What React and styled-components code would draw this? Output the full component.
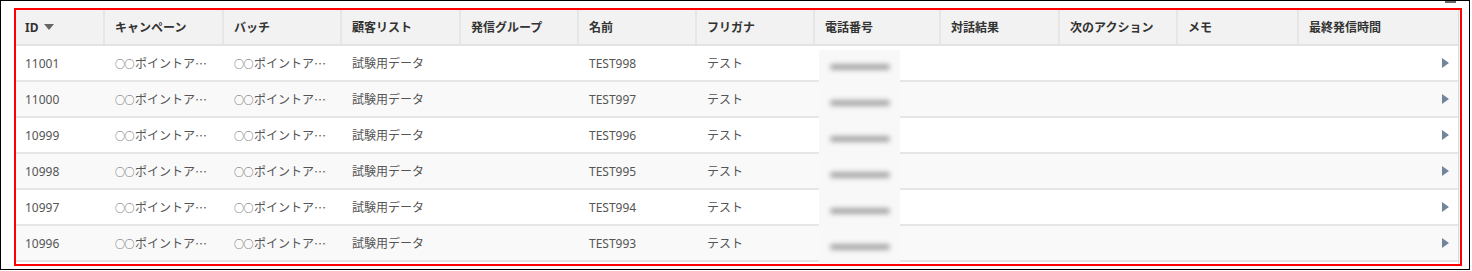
import React from "react";
import styled, { createGlobalStyle } from "styled-components";

const GlobalStyle = createGlobalStyle`
  html, body {
    margin: 0;
    padding: 0;
    background: #fff;
  }
  body {
    font-family: "Noto Sans", "Noto Sans CJK JP", sans-serif;
  }
`;

const COLS = "87px 119px 118px 119px 118px 118px 118px 126px 119px 118px 121px 159px";

const Frame = styled.div`
  position: relative;
  box-sizing: border-box;
  width: 1470px;
  height: 270px;
  border: 1px solid #000;
  padding: 7px 0 0 13px;
`;

const Nub = styled.div`
  position: absolute;
  top: 0;
  left: 1444px;
  width: 11px;
  height: 2px;
  background: #666;
`;

const Highlight = styled.div`
  box-sizing: border-box;
  width: 1448px;
  height: 258px;
  border: 2px solid #f00;
`;

const Table = styled.div`
  position: relative;
  width: 1442px;
  height: 254px;
  border-right: 1px solid #dcdcdc;
  font-size: 12px;
`;

const HeadRow = styled.div`
  display: grid;
  grid-template-columns: ${COLS};
  height: 36px;
  box-sizing: border-box;
  background: #f2f2f2;
  border-bottom: 2px solid #e3e3e3;
`;

const HeadCell = styled.div`
  display: flex;
  align-items: center;
  gap: 6px;
  padding-left: ${(p) => (p.$first ? "9px" : "10px")};
  border-left: ${(p) => (p.$first ? "none" : "2px solid #e6e6e6")};
  font-weight: bold;
  color: #333;
  white-space: nowrap;
`;

const Row = styled.div`
  display: grid;
  grid-template-columns: ${COLS};
  height: 36px;
  box-sizing: border-box;
  background: ${(p) => (p.$alt ? "#f9f9f9" : "#fff")};
  border-bottom: 2px solid #e6e6e6;
`;

const Cell = styled.div`
  display: flex;
  align-items: center;
  padding-left: ${(p) => (p.$first ? "9px" : "12px")};
  padding-right: ${(p) => (p.$end ? "7px" : "0")};
  justify-content: ${(p) => (p.$end ? "flex-end" : "flex-start")};
  color: #555;
  white-space: nowrap;
  overflow: hidden;
`;

const Circles = styled.span`
  font-family: "Noto Sans CJK JP", sans-serif;
  font-size: 10px;
  letter-spacing: -0.5px;
  margin-right: 1px;
`;

const Dots = styled.span`
  font-family: "Noto Sans CJK JP", sans-serif;
`;

const Redaction = styled.div`
  position: absolute;
  left: 803px;
  top: 40px;
  width: 81px;
  height: 214px;
  background: #f8f8f8;
  display: flex;
  flex-direction: column;
  align-items: center;
`;

const BlurBar = styled.div`
  width: 60px;
  height: 6px;
  margin-top: ${(p) => (p.$first ? "14px" : "30px")};
  background: #a8a8a8;
  border-radius: 3px;
  filter: blur(2.5px);
`;

const SortArrow = () => (
  <svg width="10" height="6" viewBox="0 0 10 6">
    <polygon points="0,0 10,0 5,6" fill="#666" />
  </svg>
);

const RowArrow = () => (
  <svg width="7" height="10" viewBox="0 0 7 10">
    <polygon points="0,0 7,5 0,10" fill="#72859a" />
  </svg>
);

const Campaign = () => (
  <>
    <Circles>○○</Circles>ポイントア<Dots>…</Dots>
  </>
);

const headers = [
  "キャンペーン",
  "バッチ",
  "顧客リスト",
  "発信グループ",
  "名前",
  "フリガナ",
  "電話番号",
  "対話結果",
  "次のアクション",
  "メモ",
  "最終発信時間",
];

const rows = [
  { id: "11001", name: "TEST998" },
  { id: "11000", name: "TEST997" },
  { id: "10999", name: "TEST996" },
  { id: "10998", name: "TEST995" },
  { id: "10997", name: "TEST994" },
  { id: "10996", name: "TEST993" },
];

export default function App() {
  return (
    <>
      <GlobalStyle />
      <Frame lang="ja">
        <Nub />
        <Highlight>
          <Table>
            <HeadRow>
              <HeadCell $first>
                ID <SortArrow />
              </HeadCell>
              {headers.map((h) => (
                <HeadCell key={h}>{h}</HeadCell>
              ))}
            </HeadRow>
            {rows.map((r, i) => (
              <Row key={r.id} $alt={i % 2 === 1}>
                <Cell $first>{r.id}</Cell>
                <Cell>
                  <Campaign />
                </Cell>
                <Cell>
                  <Campaign />
                </Cell>
                <Cell>試験用データ</Cell>
                <Cell />
                <Cell>{r.name}</Cell>
                <Cell>テスト</Cell>
                <Cell />
                <Cell />
                <Cell />
                <Cell />
                <Cell $end>
                  <RowArrow />
                </Cell>
              </Row>
            ))}
            <Redaction>
              {rows.map((r, i) => (
                <BlurBar key={r.id} $first={i === 0} />
              ))}
            </Redaction>
          </Table>
        </Highlight>
      </Frame>
    </>
  );
}
